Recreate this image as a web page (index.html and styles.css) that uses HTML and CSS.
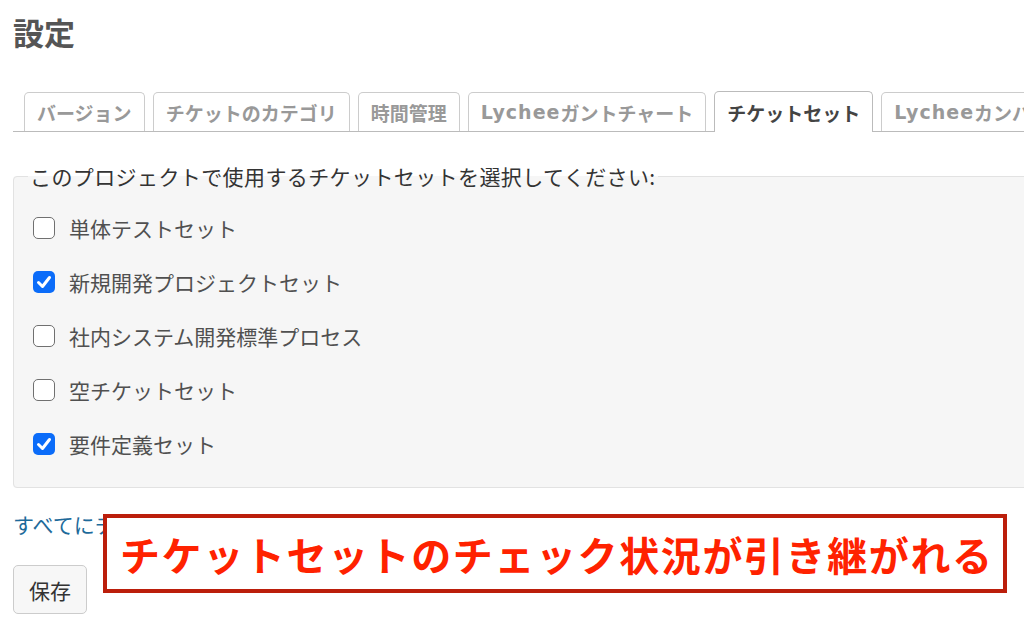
FILE: index.html
```html
<!DOCTYPE html>
<html lang="ja">
<head>
    <meta charset="UTF-8" />
    <meta name="viewport" content="width=device-width, initial-scale=1" />
    <title>設定</title>
    <link rel="stylesheet" href="styles.css">
</head>
<body>
    <div class="page">
        <h2 class="title">設定</h2>

        <ul class="tabs">
            <li class="tab">バージョン</li>
            <li class="tab">チケットのカテゴリ</li>
            <li class="tab">時間管理</li>
            <li class="tab"><span class="latin">Lychee</span>ガントチャート</li>
            <li class="tab selected">チケットセット</li>
            <li class="tab"><span class="latin">Lychee</span>カンバン</li>
        </ul>

        <form id="ticketSetForm">
            <fieldset class="box">
                <legend>このプロジェクトで使用するチケットセットを選択してください:</legend>
                <label class="row"><span class="check"></span>単体テストセット</label>
                <label class="row"><span class="check checked"><svg viewBox="0 0 22 22" width="22" height="22"><path d="M5.5 11.5 L9.5 15.5 L16.5 6.5" fill="none" stroke="#fff" stroke-width="3" stroke-linecap="round" stroke-linejoin="round"/></svg></span>新規開発プロジェクトセット</label>
                <label class="row"><span class="check"></span>社内システム開発標準プロセス</label>
                <label class="row"><span class="check"></span>空チケットセット</label>
                <label class="row"><span class="check checked"><svg viewBox="0 0 22 22" width="22" height="22"><path d="M5.5 11.5 L9.5 15.5 L16.5 6.5" fill="none" stroke="#fff" stroke-width="3" stroke-linecap="round" stroke-linejoin="round"/></svg></span>要件定義セット</label>
            </fieldset>

            <p class="links"><a href="#">すべてにチェックをつける</a><a href="#">すべてのチェックをはずす</a></p>

            <button type="submit" class="save">保存</button>
        </form>

        <div class="callout">チケットセットのチェック状況が引き継がれる</div>
    </div>
</body>
</html>
```

FILE: styles.css
```css
html, body {
    margin: 0;
    background-color: #fff;
    overflow: hidden;
}

body {
    font-family: "Noto Sans CJK JP", "Noto Sans", sans-serif;
    font-size: 21px;
    color: #505050;
}

.page {
    position: relative;
    width: 1100px;
    height: 632px;
    padding: 13px 0 0 13px;
    box-sizing: border-box;
}

.title {
    margin: 0;
    font-size: 31px;
    line-height: 37px;
    font-weight: bold;
    color: #555;
}

.tabs {
    display: flex;
    align-items: flex-end;
    gap: 8px;
    list-style: none;
    margin: 42px 0 0;
    padding: 0 0 0 11px;
    height: 39px;
    border-bottom: 1px solid #bbb;
    white-space: nowrap;
}

.tab {
    flex: none;
    display: flex;
    align-items: center;
    height: 38px;
    padding: 0 12px;
    border: 1px solid #ccc;
    border-bottom: none;
    border-radius: 5px 5px 0 0;
    font-size: 19px;
    font-weight: bold;
    color: #999;
    background-color: #fff;
}

.tab .latin {
    font-family: "DejaVu Sans", "Open Sans", sans-serif;
    font-size: 19px;
    letter-spacing: 1px;
}

.tab.selected {
    height: 40px;
    margin-bottom: -1px;
    color: #444;
    border-color: #bbb;
}

.box {
    margin: 29px 0 0;
    padding: 10px 19px 16px;
    border: 1px solid #e2e2e2;
    border-radius: 4px;
    background-color: #f6f6f6;
}

.box legend {
    margin-left: -5px;
    padding: 0 2px;
    line-height: 30px;
    letter-spacing: 0.4px;
    color: #333;
}

.row {
    display: flex;
    align-items: center;
    gap: 14px;
    height: 54px;
}

.check {
    flex: none;
    display: flex;
    width: 22px;
    height: 22px;
    box-sizing: border-box;
    border: 1.5px solid #707070;
    border-radius: 5px;
    background-color: #fff;
}

.check.checked {
    border: none;
    background-color: #0b6cf9;
}

.links {
    display: flex;
    gap: 24px;
    margin: 21px 0 0;
    line-height: 30px;
}

.links a {
    color: #1d6a9a;
    text-decoration: none;
}

.save {
    margin-top: 26px;
    height: 49px;
    padding: 0 15px;
    font-family: inherit;
    font-size: 21px;
    color: #333;
    background-color: #f7f7f7;
    border: 1px solid #ccc;
    border-radius: 5px;
}

.callout {
    position: absolute;
    left: 103px;
    top: 514px;
    width: 904px;
    height: 79px;
    box-sizing: border-box;
    display: flex;
    align-items: center;
    padding-left: 13px;
    border: 4px solid #bb1e0b;
    background-color: #fff;
    font-size: 40px;
    font-weight: bold;
    letter-spacing: 1.6px;
    color: #ff2200;
    white-space: nowrap;
}
```
